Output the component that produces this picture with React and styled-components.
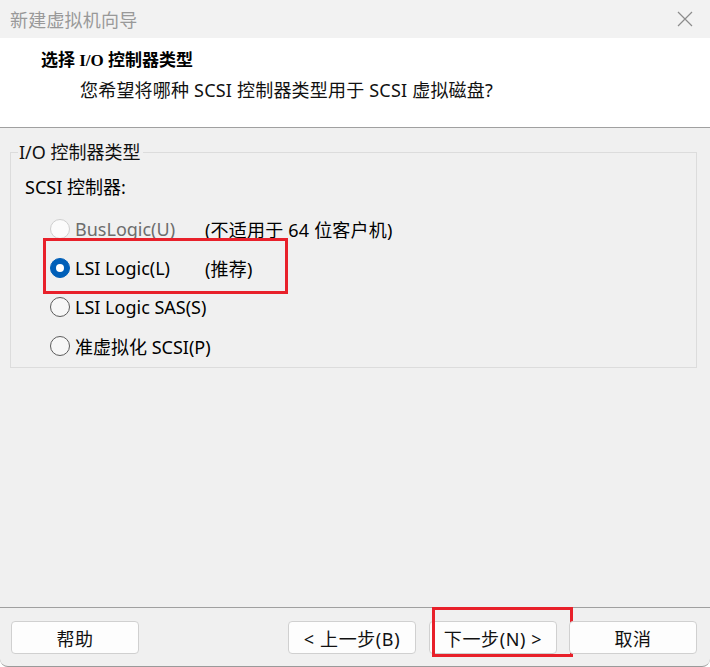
import React from 'react';
import styled, { createGlobalStyle } from 'styled-components';

const GlobalStyle = createGlobalStyle`
  html, body {
    margin: 0;
    padding: 0;
    background: #ffffff;
  }
  body {
    font-family: "Noto Sans", "Noto Sans CJK SC", sans-serif;
  }
`;

const Window = styled.div`
  width: 710px;
  height: 667px;
  box-sizing: border-box;
  display: flex;
  flex-direction: column;
  background: #f0f0f0;
  border-bottom: 1px solid #9a9a9a;
  border-radius: 0 0 8px 8px;
  overflow: hidden;
`;

const TitleBar = styled.div`
  height: 38px;
  flex: none;
  display: flex;
  align-items: center;
  justify-content: space-between;
  padding: 0 17px 0 10px;
  background: #f2f2f2;
  & > span {
    font-family: "Noto Sans CJK SC", sans-serif;
    font-size: 18px;
    color: #999999;
    letter-spacing: 0.2px;
  }
`;

const Header = styled.div`
  height: 90px;
  flex: none;
  box-sizing: border-box;
  background: #ffffff;
  border-bottom: 1px solid #a0a0a0;
  padding: 12px 0 0 41px;
  & > h1 {
    margin: 0;
    font-family: "Liberation Serif", "Noto Sans CJK SC", serif;
    font-weight: bold;
    font-size: 17px;
    line-height: 22px;
    color: #000;
  }
  & > p {
    margin: 7px 0 0 39px;
    font-family: "Noto Sans", "Noto Sans CJK SC", sans-serif;
    font-size: 18px;
    line-height: 22px;
    color: #111;
    letter-spacing: 0.2px;
  }
`;

const Body = styled.div`
  flex: 1;
  padding: 14px 13px 0 10px;
`;

const Group = styled.fieldset`
  margin: 0;
  padding: 4px 0 0 14px;
  height: 226px;
  box-sizing: border-box;
  border: 1px solid #dcdcdc;
  border-radius: 0;
  & > legend {
    margin-left: -7px;
    padding: 0 2px 0 1px;
    font-size: 18px;
    line-height: 20px;
    color: #111;
  }
`;

const Caption = styled.div`
  font-size: 18px;
  line-height: 24px;
  color: #000;
  margin: 9px 0 10px;
`;

const Options = styled.div`
  display: flex;
  flex-direction: column;
  padding-left: 25px;
`;

const Row = styled.label`
  position: relative;
  height: 39px;
  display: flex;
  align-items: center;
  font-size: 18px;
  white-space: nowrap;
  color: ${(p) => (p.$disabled ? '#6d6d6d' : '#000')};
`;

const Mark = styled.span`
  position: absolute;
  top: ${(p) => p.$t}px;
  left: ${(p) => p.$l}px;
  right: ${(p) => p.$r}px;
  bottom: ${(p) => p.$b}px;
  border: 3px solid #e8202a;
  pointer-events: none;
`;

const Dot = styled.span`
  width: 20px;
  height: 20px;
  box-sizing: border-box;
  border-radius: 50%;
  flex: none;
  margin-right: 5px;
  display: flex;
  align-items: center;
  justify-content: center;
  background: ${(p) => (p.$on ? '#005fb8' : p.$disabled ? '#fbfbfb' : '#f7f7f7')};
  border: 1px solid ${(p) => (p.$on ? '#005fb8' : p.$disabled ? '#cfcfcf' : '#5c5c5c')};
  &::after {
    content: '';
    display: ${(p) => (p.$on ? 'block' : 'none')};
    width: 8px;
    height: 8px;
    border-radius: 50%;
    background: #fff;
  }
`;

const LabelText = styled.span`
  min-width: 130px;
  flex: none;
`;

const Note = styled.span`
  color: #000;
  letter-spacing: 0.2px;
`;

const Footer = styled.div`
  flex: none;
  height: 59px;
  box-sizing: border-box;
  border-top: 1px solid #a0a0a0;
  display: flex;
  align-items: flex-start;
  padding: 13px 13px 0 11px;
`;

const Spacer = styled.div`
  flex: 1;
`;

const ButtonWrap = styled.div`
  position: relative;
  margin-left: ${(p) => p.$gap || 0}px;
`;

const Button = styled.button`
  width: 128px;
  height: 33px;
  box-sizing: border-box;
  border: 1px solid #d0d0d0;
  border-radius: 4px;
  background: #fdfdfd;
  font-family: "Noto Sans", "Noto Sans CJK SC", sans-serif;
  font-size: 18px;
  letter-spacing: 0.6px;
  color: #111;
  padding: 0;
  display: flex;
  align-items: center;
  justify-content: center;
`;

const CloseIcon = () => (
  <svg width="16" height="16" viewBox="0 0 16 16">
    <path d="M1 1 L15 15 M15 1 L1 15" stroke="#8c8c8c" strokeWidth="1.2" fill="none" />
  </svg>
);

const options = [
  { label: 'BusLogic(U)', note: '(不适用于 64 位客户机)', disabled: true },
  { label: 'LSI Logic(L)', note: '(推荐)', checked: true, marked: true },
  { label: 'LSI Logic SAS(S)' },
  { label: '准虚拟化 SCSI(P)' },
];

const App = () => {
  return (
    <Window>
      <GlobalStyle />
      <TitleBar>
        <span>新建虚拟机向导</span>
        <CloseIcon />
      </TitleBar>
      <Header>
        <h1>选择 I/O 控制器类型</h1>
        <p>您希望将哪种 SCSI 控制器类型用于 SCSI 虚拟磁盘?</p>
      </Header>
      <Body>
        <Group>
          <legend>I/O 控制器类型</legend>
          <Caption>SCSI 控制器:</Caption>
          <Options>
            {options.map((o) => (
              <Row key={o.label} $disabled={o.disabled}>
                <Dot $on={o.checked} $disabled={o.disabled} />
                <LabelText>{o.label}</LabelText>
                {o.note && <Note>{o.note}</Note>}
                {o.marked && <Mark $t={-10} $l={-7} $r={408} $b={-7} />}
              </Row>
            ))}
          </Options>
        </Group>
      </Body>
      <Footer>
        <Button>帮助</Button>
        <Spacer />
        <Button>&lt; 上一步(B)</Button>
        <ButtonWrap $gap={13}>
          <Button>下一步(N) &gt;</Button>
          <Mark $t={-14} $l={3} $r={-16} $b={-3} />
        </ButtonWrap>
        <ButtonWrap $gap={12}>
          <Button>取消</Button>
        </ButtonWrap>
      </Footer>
    </Window>
  );
};

export default App;
